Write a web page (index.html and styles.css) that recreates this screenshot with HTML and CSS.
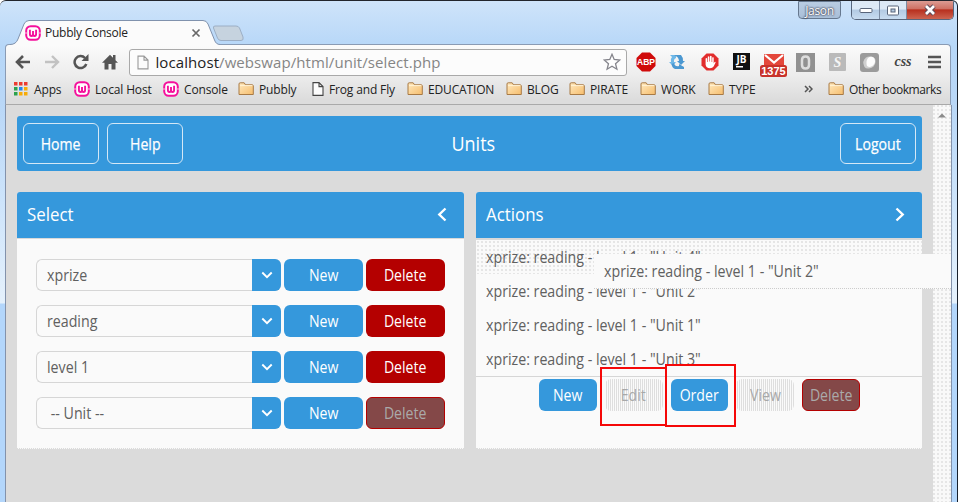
FILE: index.html
```html
<!DOCTYPE html>
<html lang="en">
<head>
<meta charset="utf-8">
<title>Pubbly Console</title>
<link rel="stylesheet" href="styles.css">
</head>
<body>
<svg class="defs" width="0" height="0">
  <defs>
    <linearGradient id="fold" x1="0" y1="0" x2="1" y2="1"><stop offset="0" stop-color="#ffe9bf"/><stop offset="1" stop-color="#f6bd6c"/></linearGradient>
    <symbol id="folder" viewBox="0 0 16 14"><path d="M1 12.500V2Q1 .8 2.200.8H6.200L7.500 2.800H14Q15.300 2.800 15.300 4V12.500Z" fill="url(#fold)" stroke="#a87a45"/><path d="M2 3.600H14.500" stroke="#fff2d5"/></symbol>
    <symbol id="file" viewBox="0 0 12 14"><path d="M1 .6H7L11 4.600V13.400H1ZM7 .6V4.600H11" fill="#fcfcfc" stroke="currentColor" stroke-width="1.100"/></symbol>
    <symbol id="wamp" viewBox="0 0 16 16"><rect x="1.200" y="1.200" width="13.600" height="13.600" rx="4.500" fill="#fff" stroke="#f5109c" stroke-width="2"/><path d="M0 8H2.200M13.800 8H16" stroke="#fbd" stroke-width="1"/><path d="M4.900 4.800V9Q4.900 11 6.400 11Q8 11 8 9V6V9Q8 11 9.600 11Q11.100 11 11.100 9V4.800" fill="none" stroke="#f5109c" stroke-width="1.900"/></symbol>
    <symbol id="down" viewBox="0 0 12 8"><path d="M1.300 1.500L6 6.200L10.700 1.500" fill="none" stroke="#fff" stroke-width="1.900"/></symbol>
  </defs>
</svg>
<div class="window">
  <header class="titlebar">
    <div class="tab">
      <svg class="tab-shape" width="210" height="25"><path d="M0 24.500Q6 24.500 8 19L14 4Q15.500.5 19 .5H193Q196.500.5 198 4L204.500 20Q206 24.500 210 24.500V25H0Z" fill="#fbfbfb"/><path d="M0 24.500Q6 24.500 8 19L14 4Q15.500.5 19 .5H193Q196.500.5 198 4L204.500 20Q206 24.500 210 24.500" fill="none" stroke="#8092ad"/></svg>
      <svg class="tab-icon" width="16" height="16"><use href="#wamp"/></svg>
      <span class="tab-title">Pubbly Console</span>
      <svg class="tab-close" width="10" height="10"><path d="M1.500 1.500L8.500 8.500M8.500 1.500L1.500 8.500" stroke="#686868" stroke-width="1.700"/></svg>
    </div>
    <svg class="new-tab" width="33" height="17"><path d="M3 1H24Q26.500 1 27.500 3L31 12Q32 15.500 29 15.500H9Q6.500 15.500 5.500 13L1.500 3Q1 1 3 1Z" fill="#c6d3df" stroke="#9caec4"/></svg>
    <div class="user">Jason</div>
    <div class="controls">
      <span class="ctl"><svg width="14" height="8"><rect x="1" y="2.500" width="12" height="4" rx="1" fill="#fff" stroke="#59657a"/></svg></span>
      <span class="ctl ctl-max"><svg width="14" height="11"><rect x="1.500" y="1" width="11" height="9" rx="1" fill="#fff" stroke="#59657a"/><rect x="5" y="4" width="4" height="3" fill="#b4c9df" stroke="#59657a"/></svg></span>
      <span class="ctl ctl-close"><svg width="14" height="12"><path d="M3 2L11 10M11 2L3 10" stroke="#5c4a58" stroke-width="4.600"/><path d="M3 2L11 10M11 2L3 10" stroke="#fff" stroke-width="2.700"/></svg></span>
    </div>
  </header>

  <div class="chrome">
    <div class="toolbar">
      <svg width="16" height="14"><path d="M8 1L2 7L8 13M2 7H15" fill="none" stroke="#555" stroke-width="2.600"/></svg>
      <svg width="16" height="14"><path d="M8 1L14 7L8 13M14 7H1" fill="none" stroke="#c2c2c2" stroke-width="2.400"/></svg>
      <svg width="16" height="16"><path d="M13.300 10A6 6 0 1 1 12 4" fill="none" stroke="#555" stroke-width="2.500"/><path d="M15.500 0V7H8.500Z" fill="#555"/></svg>
      <svg width="16" height="16"><path d="M0 8.700L8 .7L11 3.700V1H13.500V6.200L16 8.700H13.500V15.500H9.500V10H6.500V15.500H2.500V8.700Z" fill="#555"/></svg>
      <div class="omnibox">
        <svg class="page-icon" width="12" height="15"><use href="#file"/></svg>
        <span class="url"><b>localhost</b>/webswap/html/unit/select.php</span>
        <svg class="star" width="18" height="18"><path d="M9 1.300L11.200 6.500L16.800 7L12.500 10.700L13.900 16.200L9 13.200L4.100 16.200L5.500 10.700L1.200 7L6.800 6.500Z" fill="#fff" stroke="#85858c" stroke-width="1.300"/></svg>
      </div>
      <svg width="20" height="20"><path d="M6 .5H14L19.500 6V14L14 19.500H6L.5 14V6Z" fill="#d00b0b"/><text x="10" y="13.300" class="abp">ABP</text></svg>
      <svg width="16" height="16"><path d="M1 1H7V4Q4.500 5 5 8H7L4 12L0 8H2Q1 5 3 3Z" fill="#6eb8e8"/><path d="M5 1H12Q14 3 14 7H16L12 11L8 7H10Q10 3 5 1ZM15 15H6Q3 14 2.500 10L5 9Q6 13 10 12V10L15 13Z" fill="#4b98d1"/></svg>
      <svg width="18" height="18"><path d="M5.500.5H12.500L17.500 5.500V12.500L12.500 17.500H5.500L.5 12.500V5.500Z" fill="#e22d2d"/><path d="M4.600 10V5.600Q5.400 4.600 6.200 5.600V9H6.800V3.800Q7.600 2.800 8.400 3.800V8.500H9V3.300Q9.800 2.400 10.600 3.300V9H11.200V4.600Q12 3.800 12.700 4.600V10.500L13.500 9Q14.600 8.500 14.600 9.500L12.600 13.500Q11.500 15.300 9 15.300Q5 15.300 4.600 11.500Z" fill="#fff"/></svg>
      <svg width="18" height="18"><rect width="17" height="17" fill="#111"/><text x="8.500" y="10" class="jb">JB</text><path d="M3 13.700H10" stroke="#fff" stroke-width="1.500"/></svg>
      <svg class="mail" width="28" height="24"><rect x="4" y="0" width="20" height="15" rx="1" fill="#e4473b"/><path d="M5 1L14 8.500L23 1" fill="none" stroke="#fff" stroke-width="2.200"/><rect x="0" y="11" width="27" height="12" rx="2.500" fill="#c8322b"/><text x="13.500" y="21" class="count">1375</text></svg>
      <svg width="19" height="19"><rect width="19" height="19" fill="#919191"/><path d="M9.500 3.500Q13 3.500 13 7V12Q13 15.500 9.500 15.500Q6 15.500 6 12V7Q6 3.500 9.500 3.500Z" fill="none" stroke="#ddd" stroke-width="2.500"/></svg>
      <svg width="17" height="18"><rect width="17" height="18" rx="1" fill="#bababa"/><text x="8.500" y="14" class="script-s">S</text></svg>
      <svg width="19" height="19"><rect width="19" height="19" rx="3" fill="#9b9b9b"/><path d="M4.500 14Q1.500 8 6 4.500Q8 3 11 3.500Q16 4 15.500 9Q15 14.500 9 15.500Q6 16 4.500 14Z" fill="#d0d0d0"/><path d="M7 13Q5.500 8 8 5Q11 2.500 14 5Q16.500 9 13 12.500Q10 15 7 13Z" fill="#fdfdfd"/></svg>
      <span class="css-ext">css</span>
      <svg width="13" height="14"><path d="M0 2H13M0 7H13M0 12H13" stroke="#555" stroke-width="2.700"/></svg>
    </div>
    <nav class="bookmarks">
      <span><svg width="14" height="14"><path d="M0 0h3.500v3.500h-3.500zM5 0h3.500v3.500h-3.500zM10 0h3.500v3.500h-3.500z" fill="#ec3c30"/><path d="M0 5h3.500v3.500h-3.500zM0 10h3.500v3.500h-3.500z" fill="#2ba24c"/><path d="M5 5h3.500v3.500h-3.500z" fill="#2786e8"/><path d="M10 5h3.500v3.500h-3.500zM5 10h3.500v3.500h-3.500zM10 10h3.500v3.500h-3.500z" fill="#f7ac08"/></svg>Apps</span>
      <span><svg width="16" height="16"><use href="#wamp"/></svg>Local Host</span>
      <span><svg width="16" height="16"><use href="#wamp"/></svg>Console</span>
      <span><svg width="16" height="14"><use href="#folder"/></svg>Pubbly</span>
      <span><svg class="dark" width="12" height="14"><use href="#file"/></svg>Frog and Fly</span>
      <span><svg width="16" height="14"><use href="#folder"/></svg>EDUCATION</span>
      <span><svg width="16" height="14"><use href="#folder"/></svg>BLOG</span>
      <span><svg width="16" height="14"><use href="#folder"/></svg>PIRATE</span>
      <span><svg width="16" height="14"><use href="#folder"/></svg>WORK</span>
      <span><svg width="16" height="14"><use href="#folder"/></svg>TYPE</span>
      <span><svg width="9" height="8"><path d="M1 1L4 4L1 7M5 1L8 4L5 7" fill="none" stroke="#555" stroke-width="1.500"/></svg></span>
      <span class="other"><svg width="16" height="14"><use href="#folder"/></svg>Other bookmarks</span>
    </nav>
  </div>

  <div class="viewport">
    <main class="page">
      <div class="topbar">
        <button class="outline"><span>Home</span></button>
        <button class="outline"><span>Help</span></button>
        <h1><span>Units</span></h1>
        <button class="outline"><span>Logout</span></button>
      </div>
      <div class="panels">
        <section class="panel">
          <div class="panel-head"><h2>Select</h2><svg width="10" height="15"><path d="M8.500 1.500L2.300 7.500L8.500 13.500" fill="none" stroke="#fff" stroke-width="2.400"/></svg></div>
          <div class="rows">
            <div class="row"><div class="select"><span>xprize</span><i><svg width="12" height="8"><use href="#down"/></svg></i></div><button class="btn"><span>New</span></button><button class="btn danger"><span>Delete</span></button></div>
            <div class="row"><div class="select"><span>reading</span><i><svg width="12" height="8"><use href="#down"/></svg></i></div><button class="btn"><span>New</span></button><button class="btn danger"><span>Delete</span></button></div>
            <div class="row"><div class="select"><span>level 1</span><i><svg width="12" height="8"><use href="#down"/></svg></i></div><button class="btn"><span>New</span></button><button class="btn danger"><span>Delete</span></button></div>
            <div class="row"><div class="select"><span>&nbsp;-- Unit --</span><i><svg width="12" height="8"><use href="#down"/></svg></i></div><button class="btn"><span>New</span></button><button class="btn danger off"><span>Delete</span></button></div>
          </div>
        </section>
        <section class="panel">
          <div class="panel-head"><h2>Actions</h2><svg width="10" height="15"><path d="M1.500 1.500L7.700 7.500L1.500 13.500" fill="none" stroke="#fff" stroke-width="2.400"/></svg></div>
          <ul class="units">
            <li class="hovered"><span>xprize: reading - level 1 - "Unit 4"</span></li>
            <li><span>xprize: reading - level 1 - "Unit 2"</span></li>
            <li><span>xprize: reading - level 1 - "Unit 1"</span></li>
            <li><span>xprize: reading - level 1 - "Unit 3"</span></li>
          </ul>
          <div class="actions">
            <button class="btn"><span>New</span></button>
            <button class="btn ghost"><span>Edit</span></button>
            <button class="btn"><span>Order</span></button>
            <button class="btn ghost"><span>View</span></button>
            <button class="btn danger off"><span>Delete</span></button>
          </div>
        </section>
      </div>
    </main>
    <aside class="scrollbar"><svg width="8" height="5"><path d="M0 4.500L4 .5L8 4.500Z" fill="#8b8b8b"/></svg></aside>
  </div>
  <div class="dragged"><span>xprize: reading - level 1 - "Unit 2"</span></div>
  <div class="mark mark-edit"></div>
  <div class="mark mark-order"></div>
</div>
</body>
</html>
```
FILE: styles.css
```css
* { box-sizing: border-box; }
body { margin: 0; font-family: "Open Sans", "Noto Sans", sans-serif; }
.defs { position: absolute; }
svg { display: block; flex: none; }
button { font: inherit; padding: 0; }

.window {
  position: relative;
  width: 958px;
  height: 502px;
  overflow: hidden;
  padding: 0 6px 0 5px;
  border-top: 1px solid #22252c;
  border-right: 1px solid #18202c;
  border-radius: 6px 6px 0 0;
  background: linear-gradient(#cfe4fa 0, #b7d7f8 45px, #b9d7f7 100px, #cde4fb 200px, #e5f1fc 302px, #b3d6fb 303px);
}

.titlebar { display: flex; height: 43px; align-items: flex-start; }
.tab { position: relative; z-index: 1; display: flex; align-items: center; width: 210px; height: 25px; margin: 19px 0 0 5px; padding-left: 15px; }
.tab-shape { position: absolute; left: 0; top: 0; }
.tab-icon, .tab-title, .tab-close { position: relative; }
.tab-title { width: 146px; margin-left: 4px; font-size: 12px; letter-spacing: -.25px; color: #222; }
.new-tab { margin: 24px 0 0 -8px; }
.user {
  width: 43px; height: 18px; margin: 0 10px 0 auto;
  border: 1px solid #66788f; border-radius: 0 0 4px 4px;
  background: linear-gradient(#b9cce2, #a9bfd8);
  font-size: 12px; line-height: 18px; text-align: center; letter-spacing: -.3px; color: #fff; text-shadow: 0 0 2px #334, 0 0 2px #334;
}
.controls { display: flex; width: 103px; height: 19px; margin-right: -3px; border: 1px solid #58667c; border-top: 0; border-radius: 0 0 5px 5px; overflow: hidden; }
.ctl { display: flex; align-items: center; justify-content: center; width: 28px; background: linear-gradient(#dde9f6 45%, #b3cae3 50%, #c8dcf0); border-right: 1px solid #7c8ca3; }
.ctl-max { width: 27px; }
.ctl-close { width: 46px; border: 0; background: linear-gradient(#dc9c93 0, #cf7265 42%, #b8301f 50%, #cd6450); }

.chrome { height: 61px; border: 1px solid #8a9bb4; border-bottom-color: #a9a9a9; border-radius: 4px 4px 0 0; background: linear-gradient(#fbfbfb, #ededed 30px, #dcdcdc 55px); }
.toolbar {
  display: grid; height: 34px; align-items: center; justify-items: center;
  grid-template-columns: 29px 29px 29px 29px 506px 31px 32px 33px 32px 31px 33px 31px 33px 34px 28px;
  padding-left: 2px; width: 944px;
}
.omnibox { display: flex; align-items: center; width: 498px; height: 27px; padding: 0 5px 0 7px; border: 1px solid #a9a9a9; border-radius: 3px; background: #fcfcfc; margin-left: 1px; }
.page-icon { color: #999; }
.url { margin-left: 7px; font-size: 15px; color: #858585; letter-spacing: .08px; white-space: nowrap; }
.url b { font-weight: 400; color: #222; }
.star { margin-left: auto; }
.abp { font: 700 8.5px "Liberation Sans", sans-serif; fill: #fff; text-anchor: middle; }
.jb { font: 700 10px "Open Sans", sans-serif; fill: #fff; text-anchor: middle; }
.count { font: 700 11px "Liberation Sans", sans-serif; fill: #fff; text-anchor: middle; }
.script-s { font: italic 700 14px "Liberation Serif", serif; fill: #f5f5f5; text-anchor: middle; }
.mail { position: relative; top: 4px; }
.css-ext { font: italic 700 14px "Liberation Serif", serif; color: #444; }

.bookmarks {
  display: grid; height: 20px; padding-left: 8px; align-items: center;
  grid-template-columns: 60px 89px 75px 74px 95px 99px 63px 71px 68px 96px 24px 120px;
  font-size: 12px; letter-spacing: -.15px; color: #222;
}
.bookmarks span { display: flex; align-items: center; gap: 5px; white-space: nowrap; }
.bookmarks span:first-child { gap: 6px; }
.bookmarks .other { letter-spacing: -.42px; }
.dark { color: #444; }

.viewport { display: flex; height: 398px; width: 947px; border: 1px solid #8392ab; border-width: 0 1px; background: #dbdbdb; }
.page { width: 927px; padding: 11px 11px 0; font-size: 16px; }
.scrollbar { width: 18px; padding: 8px 0 0 5px; background: repeating-conic-gradient(#f9f9f9 0 75%, #e6e6e6 0 100%) 0 0 / 4px 4px; }
.topbar { display: flex; align-items: center; gap: 8px; height: 55px; width: 905px; padding: 0 6px; border-radius: 3px; background: #3598dc; color: #fff; }
.topbar h1 { flex: 1; margin: 0; padding-right: 76px; text-align: center; font-size: 20px; font-weight: 400; }
.outline { width: 76px; height: 41px; border: 1px solid #d5e8f6; border-radius: 6px; background: none; color: #fff; font-size: 16px; -webkit-text-stroke: .25px; }

/* Condensed labels */
.outline span, .btn span, .topbar h1 span { display: inline-block; transform: scaleX(.88); }
.topbar h1 span { transform: scaleX(.9); }
.panel-head h2, .select span, .units span, .dragged span { transform: scaleX(.888); transform-origin: left; }
.units span, .dragged span { display: inline-block; }

.panels { display: grid; grid-template-columns: 447px 446px; gap: 12px; margin-top: 21px; }
.panel { height: 257px; border-radius: 3px 3px 0 0; background: #fafafa; overflow: hidden; border-bottom: 1px dotted #dbdbdb; }
.panel-head { display: flex; align-items: center; justify-content: space-between; height: 47px; padding: 0 17px 2px 10px; border-bottom: 1px solid #d9d9d9; background: #3598dc; color: #fff; }
.panel + .panel .panel-head { height: 48px; border-bottom-width: 2px; }
.panel-head h2 { margin: 0; font-size: 19px; font-weight: 400; }
.rows { display: grid; gap: 14px; padding: 20px 19px; }
.row { display: flex; gap: 3px; height: 32px; }
.select { display: flex; justify-content: space-between; width: 245px; padding-left: 10px; border: 1px solid #d6d6d6; border-right: 0; border-radius: 6px; color: #606060; }
.select span { line-height: 31px; }
.select i { display: flex; align-items: center; justify-content: center; width: 29px; margin: -1px 0; border-radius: 0 6px 6px 0; background: #3598dc; }
.btn { width: 79px; height: 32px; border: 0; border-radius: 6px; background: #3598dc; color: #fff; font-size: 16px; line-height: 32px; }
.danger { background: #b40000; }
.danger.off { border: 1px solid #b40000; background: #844848; color: #aaa; line-height: 30px; }
.ghost { background: repeating-linear-gradient(90deg, #fafafa 0 1px, #dedede 1px 2px); color: #a8a8a8; }

.units { height: 137px; margin: 0; padding: 0; list-style: none; border-bottom: 1px solid #d6d6d6; color: #606060; overflow: hidden; }
.units li { height: 34px; padding-left: 10px; line-height: 34px; }
.units .hovered { background: radial-gradient(#dedede .6px, #fafafa 1px) 0 0 / 4px 4px; }
.actions { display: flex; gap: 8px; padding: 2px 0 0 63px; }
.actions .btn { width: 57.8px; }

.dragged {
  position: absolute; left: 594px; top: 253px; width: 357px; height: 35px; padding-left: 10px;
  background: #fafafa; border-bottom: 1px dotted #ccc; color: #606060; font-size: 16px; line-height: 34px;
}
.mark { position: absolute; border: 2px solid #f50808; }
.mark-edit { left: 600px; top: 366px; width: 67px; height: 59px; }
.mark-order { left: 665px; top: 363px; width: 71px; height: 63px; }
```
